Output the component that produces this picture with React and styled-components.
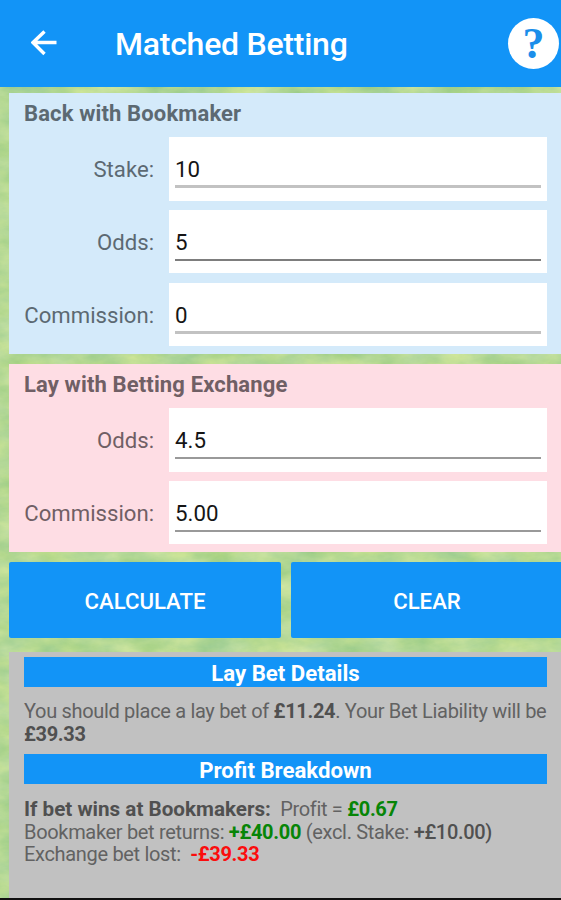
import React from "react";
import styled, { createGlobalStyle } from "styled-components";

const GlobalStyle = createGlobalStyle`
  body {
    margin: 0;
    overflow: hidden;
    font-family: Roboto, "Liberation Sans", sans-serif;
  }
  * {
    box-sizing: border-box;
  }
`;

const Screen = styled.div`
  position: relative;
  isolation: isolate;
  width: 561px;
  height: 900px;
  display: flex;
  flex-direction: column;
  overflow: hidden;
  background: #b5dc98;
  border-bottom: 2px solid #101010;
`;

const Grass = styled.svg`
  position: absolute;
  inset: 0;
  z-index: -1;
`;

const Header = styled.header`
  height: 87px;
  flex-shrink: 0;
  display: flex;
  align-items: center;
  padding: 0 2px 1px 31px;
  background: #1294f7;
  color: #fff;
`;

const Title = styled.h1`
  flex: 1;
  margin: 2px 0 0 58px;
  font-size: 32px;
  line-height: 38px;
  font-weight: 500;
  letter-spacing: -0.25px;
  white-space: nowrap;
`;

const HelpButton = styled.div`
  width: 51px;
  height: 51px;
  border-radius: 50%;
  background: #fff;
  color: #1b8eea;
  font: bold 44px/52px "Liberation Serif", serif;
  text-align: center;
`;

const Main = styled.main`
  flex: 1;
  display: flex;
  flex-direction: column;
  padding: 6px 0 0 9px;
`;

const Panel = styled.section`
  height: ${({ $height }) => $height}px;
  margin-bottom: 10px;
  padding: 8px 14px 0 15px;
  background: ${({ $color }) => $color};
  color: ${({ $text }) => $text};
`;

const PanelTitle = styled.h2`
  margin: 0 0 10px;
  font-size: 22px;
  line-height: 26px;
  font-weight: 700;
  letter-spacing: 0.14px;
  white-space: nowrap;
`;

const Row = styled.div`
  display: flex;
  align-items: center;
  height: 63.5px;
  margin-bottom: 9.3px;
`;

const Label = styled.label`
  width: 130px;
  margin-right: 15px;
  padding-top: 1px;
  font-size: 22.15px;
  line-height: 26px;
  text-align: right;
  white-space: nowrap;
`;

const Field = styled.div`
  flex: 1;
  height: 100%;
  padding: 0 6px;
  background: #fff;
`;

const Value = styled.div`
  height: 51px;
  padding-top: 19px;
  border-bottom: ${({ $active, $light }) =>
    $active ? `2px solid ${$light ? "#999" : "#7d7d7d"}` : "3px solid #c2c2c2"};
  color: #151515;
  font-size: 22.3px;
  line-height: 26px;
`;

const Buttons = styled.div`
  display: flex;
  gap: 10px;
  height: 76px;
  margin-bottom: 14px;
`;

const Button = styled.button`
  width: 272px;
  flex-shrink: 0;
  padding: 1px 0 0;
  border: 0;
  border-radius: 2px;
  background: #1294f7;
  color: #fff;
  font: 500 22.2px Roboto, sans-serif;
`;

const Results = styled.section`
  flex: 1;
  padding: 5px 14px 0 15px;
  background: #c1c1c1;
  color: #626262;
  font-size: 20px;
  line-height: 22.5px;
  letter-spacing: -0.32px;
  white-space: nowrap;
`;

const Banner = styled.h3`
  height: 30px;
  margin: 0;
  background: #1294f7;
  color: #fff;
  font-size: 22.2px;
  line-height: 32px;
  font-weight: 700;
  letter-spacing: 0;
  text-align: center;
`;

const Paragraph = styled.div`
  height: ${({ $height }) => $height}px;
  padding-top: ${({ $top }) => $top}px;
`;

const Line = styled.div`
  height: 22.5px;
`;

const Outcome = styled.b`
  color: #505050;
  font-size: 20.65px;
  letter-spacing: 0;
`;

const Amount = styled.b`
  color: ${({ $color }) => $color || "#505050"};
  font-weight: ${({ $weight }) => $weight || 700};
`;

const backFields = [
  { label: "Stake:", value: "10" },
  { label: "Odds:", value: "5", active: true },
  { label: "Commission:", value: "0" },
];

const layFields = [
  { label: "Odds:", value: "4.5", active: true, light: true },
  { label: "Commission:", value: "5.00", active: true, light: true },
];

function Fields({ items }) {
  return items.map(({ label, value, active, light }) => (
    <Row key={label}>
      <Label>{label}</Label>
      <Field>
        <Value $active={active} $light={light}>
          {value}
        </Value>
      </Field>
    </Row>
  ));
}

function App() {
  return (
    <>
      <GlobalStyle />
      <Screen>
        <Grass width="561" height="900">
          <filter
            id="grass"
            x="0"
            y="0"
            width="100%"
            height="100%"
            colorInterpolationFilters="sRGB"
          >
            <feTurbulence
              type="fractalNoise"
              baseFrequency="0.025 0.05"
              numOctaves="5"
              seed="4"
            />
            <feColorMatrix
              values="0.28 0 0 0 0.57
                      0.14 0 0 0 0.78
                      0.1 0.12 0 0 0.47
                      0 0 0 0 1"
            />
          </filter>
          <rect width="561" height="900" filter="url(#grass)" />
        </Grass>
        <Header>
          <svg width="26" height="26" viewBox="0 0 26 26" fill="none">
            <path
              d="M25.5 12.5H2M13.5 1.5L2 12.5L13.5 24"
              stroke="#fff"
              strokeWidth="3.4"
            />
          </svg>
          <Title>Matched Betting</Title>
          <HelpButton>?</HelpButton>
        </Header>
        <Main>
          <Panel $height={261} $color="#d4eafa" $text="#5c6972">
            <PanelTitle>Back with Bookmaker</PanelTitle>
            <Fields items={backFields} />
          </Panel>
          <Panel $height={188} $color="#fedde4" $text="#705f65">
            <PanelTitle>Lay with Betting Exchange</PanelTitle>
            <Fields items={layFields} />
          </Panel>
          <Buttons>
            <Button>CALCULATE</Button>
            <Button>CLEAR</Button>
          </Buttons>
          <Results>
            <Banner>Lay Bet Details</Banner>
            <Paragraph $top={13} $height={67}>
              <Line>
                You should place a lay bet of <Amount>£11.24</Amount>. Your Bet
                Liability will be
              </Line>
              <Line>
                <Amount>£39.33</Amount>
              </Line>
            </Paragraph>
            <Banner>Profit Breakdown</Banner>
            <Paragraph $top={14}>
              <Line>
                <Outcome>If bet wins at Bookmakers:</Outcome>&nbsp; Profit ={" "}
                <Amount $color="#078507">£0.67</Amount>
              </Line>
              <Line>
                Bookmaker bet returns: <Amount $color="#078507">+£40.00</Amount>{" "}
                (excl. Stake: <Amount $weight={500}>+£10.00)</Amount>
              </Line>
              <Line>
                Exchange bet lost:&nbsp;{" "}
                <Amount $color="#fb0d0d">-£39.33</Amount>
              </Line>
            </Paragraph>
          </Results>
        </Main>
      </Screen>
    </>
  );
}

export default App;
